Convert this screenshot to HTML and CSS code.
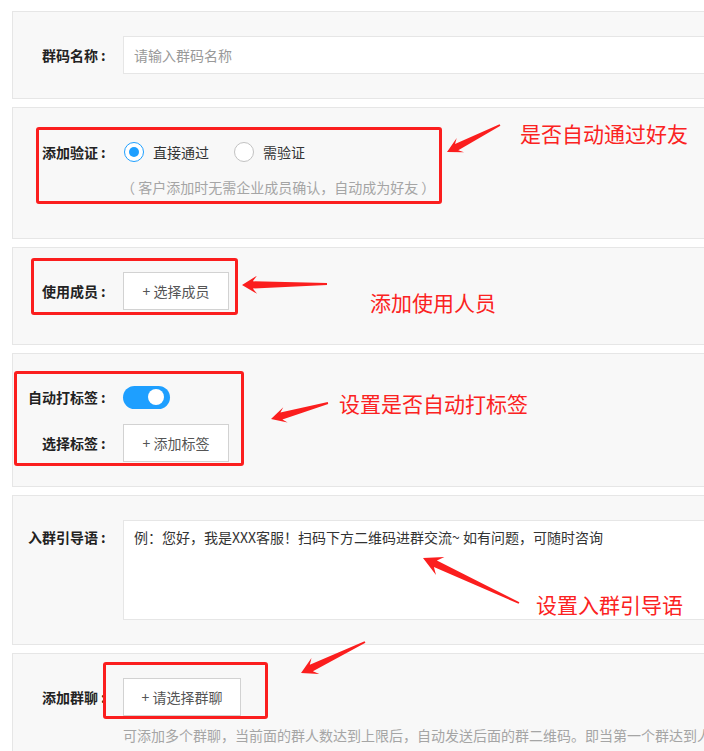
FILE: index.html
```html
<!DOCTYPE html>
<html lang="zh-CN">
<head>
  <meta charset="UTF-8">
  <title>群活码设置</title>
  <link rel="stylesheet" href="styles.css">
</head>
<body>

<div class="page">
  <!-- 群码名称 -->
  <div class="panel panel-name">
    <div class="row">
      <label class="label">群码名称<em>:</em></label>
      <input class="input" type="text" placeholder="请输入群码名称">
    </div>
  </div>

  <!-- 添加验证 -->
  <div class="panel panel-verify">
    <div class="row">
      <label class="label">添加验证<em>:</em></label>
      <span class="radio checked"><i></i>直接通过</span>
      <span class="radio"><i></i>需验证</span>
    </div>
    <p class="hint hint-verify">（ 客户添加时无需企业成员确认，自动成为好友 ）</p>
  </div>

  <!-- 使用成员 -->
  <div class="panel panel-member">
    <div class="row">
      <label class="label">使用成员<em>:</em></label>
      <button class="btn" type="button">+ 选择成员</button>
    </div>
  </div>

  <!-- 标签 -->
  <div class="panel panel-tag">
    <div class="row row-switch">
      <label class="label">自动打标签<em>:</em></label>
      <span class="switch on"><i></i></span>
    </div>
    <div class="row">
      <label class="label">选择标签<em>:</em></label>
      <button class="btn" type="button">+ 添加标签</button>
    </div>
  </div>

  <!-- 入群引导语 -->
  <div class="panel panel-guide">
    <div class="row row-top">
      <label class="label">入群引导语<em>:</em></label>
      <textarea class="textarea">例：您好，我是XXX客服！扫码下方二维码进群交流~ 如有问题，可随时咨询</textarea>
    </div>
  </div>

  <!-- 添加群聊 -->
  <div class="panel panel-group">
    <div class="row">
      <label class="label">添加群聊<em>:</em></label>
      <button class="btn btn-group" type="button">+ 请选择群聊</button>
    </div>
    <p class="hint hint-group">可添加多个群聊，当前面的群人数达到上限后，自动发送后面的群二维码。即当第一个群达到人数上限后，才会发送第二个群的二维码。<br>群满后再加入的群二维码，否则会影响拉群效果。</p>
  </div>
</div>

<!-- 标注 -->
<div class="notes">
  <div class="mark" style="left:36px; top:127px; width:406px; height:77px;"></div>
  <div class="mark" style="left:31px; top:258px; width:207px; height:57px;"></div>
  <div class="mark" style="left:14px; top:371px; width:230px; height:95px;"></div>
  <div class="mark" style="left:103px; top:662px; width:165px; height:57px;"></div>

  <span class="note" style="left:520px; top:121px;">是否自动通过好友</span>
  <span class="note" style="left:370px; top:290px;">添加使用人员</span>
  <span class="note" style="left:339px; top:391px;">设置是否自动打标签</span>
  <span class="note" style="left:536px; top:592px;">设置入群引导语</span>

  <svg class="arrows" id="arrows" width="704" height="751" viewBox="0 0 704 751"></svg>
</div>

<script>
  // tail x, tail y, tip x, tip y, head length, head half width
  const arrows = [
    [500, 125, 447, 152, 15, 8],
    [327, 284, 242, 285, 15, 9],
    [328, 403, 271, 419, 15, 8],
    [519, 603, 423, 558, 19, 10],
    [365, 642, 301, 673, 16, 9]
  ];

  function arrowPoints(x1, y1, x2, y2, head, half) {
    const dx = x2 - x1, dy = y2 - y1;
    const len = Math.sqrt(dx * dx + dy * dy);
    const ux = dx / len, uy = dy / len;
    const nx = -uy, ny = ux;
    const tail = 0.9, neck = 3.6, neckBack = head * 0.72;
    const pts = [
      [x1 + nx * tail, y1 + ny * tail],
      [x2 - ux * neckBack + nx * neck, y2 - uy * neckBack + ny * neck],
      [x2 - ux * head + nx * half, y2 - uy * head + ny * half],
      [x2, y2],
      [x2 - ux * head - nx * half, y2 - uy * head - ny * half],
      [x2 - ux * neckBack - nx * neck, y2 - uy * neckBack - ny * neck],
      [x1 - nx * tail, y1 - ny * tail]
    ];
    return pts.map(p => p[0].toFixed(1) + ',' + p[1].toFixed(1)).join(' ');
  }

  const svg = document.getElementById('arrows');
  svg.innerHTML = arrows.map(a =>
    `<polygon points="${arrowPoints(...a)}" fill="#fb1e1e"></polygon>`
  ).join('');
</script>
</body>
</html>
```

FILE: styles.css
```css
/* General Styles */
html, body {
  margin: 0;
  padding: 0;
}
body {
  position: relative;
  width: 704px;
  height: 751px;
  overflow: hidden;
  background: #fff;
  color: #333;
  font-family: "Noto Sans CJK SC", "Microsoft YaHei", sans-serif;
  font-size: 14px;
}
.page {
  padding: 11px 0 0 12px;
}
.panel {
  width: 760px;
  margin-bottom: 8px;
  background: #f8f8f8;
  border: 1px solid #e6e6e6;
}
.panel-name { padding: 24px 0; }
.panel-verify { padding: 34px 0 41px; }
.panel-member { padding: 24px 0 34px; }
.panel-tag { padding: 24px 0; }
.panel-guide { padding: 24px 0; }
.panel-group { padding: 24px 0 40px; }

.row {
  display: flex;
  align-items: center;
}
.row-top {
  align-items: flex-start;
}
.row-switch {
  height: 38px;
  margin-bottom: 8px;
}
.label {
  flex-shrink: 0;
  width: 96px;
  margin-right: 14px;
  line-height: 20px;
  text-align: right;
  font-weight: bold;
  color: #222;
}
.label em {
  display: inline-block;
  width: 8px;
  padding-left: 3px;
  font-style: normal;
  text-align: left;
}
.row-top .label {
  margin-top: 7px;
}

/* Inputs */
.input {
  flex: 1;
  height: 38px;
  box-sizing: border-box;
  padding: 0 10px;
  border: 1px solid #e6e6e6;
  background: #fff;
  font-family: inherit;
  font-size: 14px;
  color: #333;
  outline: none;
}
.input::placeholder {
  color: #999;
}
.textarea {
  flex: 1;
  height: 100px;
  box-sizing: border-box;
  padding: 6px 10px;
  border: 1px solid #e6e6e6;
  background: #fff;
  font-family: inherit;
  font-size: 14px;
  line-height: 20px;
  color: #333;
  resize: none;
  outline: none;
}

/* Radio */
.radio {
  display: flex;
  align-items: center;
  margin-right: 24px;
  line-height: 20px;
  color: #333;
}
.radio i {
  position: relative;
  width: 20px;
  height: 20px;
  box-sizing: border-box;
  margin: 0 9px 0 1px;
  border: 1px solid #c2c2c2;
  border-radius: 50%;
  background: #fff;
}
.radio.checked i {
  border-color: #1e9fff;
}
.radio.checked i::after {
  content: "";
  position: absolute;
  left: 4px;
  top: 4px;
  width: 10px;
  height: 10px;
  border-radius: 50%;
  background: #1e9fff;
}

.hint {
  margin: 0;
  color: #a5a5a5;
  font-size: 14px;
}
.hint-verify {
  margin: 15px 0 0 108px;
  line-height: 20px;
}
.hint-group {
  margin: 8px 0 0 110px;
  line-height: 22px;
  white-space: nowrap;
}

/* Button */
.btn {
  width: 106px;
  height: 38px;
  padding: 0;
  border: 1px solid #d2d2d2;
  background: #fff;
  font-family: inherit;
  font-size: 14px;
  color: #555;
}
.btn-group {
  width: 118px;
}

/* Switch */
.switch {
  position: relative;
  display: inline-block;
  width: 47px;
  height: 23px;
  border-radius: 12px;
  background: #d2d2d2;
}
.switch.on {
  background: #1e9fff;
}
.switch i {
  position: absolute;
  top: 3.5px;
  left: 5px;
  width: 16px;
  height: 16px;
  border-radius: 50%;
  background: #fff;
}
.switch.on i {
  left: auto;
  right: 6px;
}

/* Annotations */
.notes {
  position: absolute;
  left: 0;
  top: 0;
  width: 704px;
  height: 751px;
  pointer-events: none;
}
.mark {
  position: absolute;
  box-sizing: border-box;
  border: 3px solid #fb1e1e;
  border-radius: 3px;
}
.note {
  position: absolute;
  font-size: 21px;
  line-height: 24px;
  color: #fb2222;
  white-space: nowrap;
}
.arrows {
  position: absolute;
  left: 0;
  top: 0;
}
```
